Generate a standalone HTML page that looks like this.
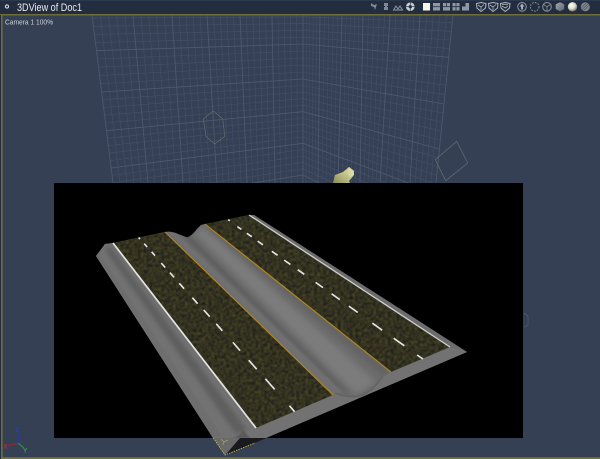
<!DOCTYPE html>
<html><head><meta charset="utf-8"><title>3DView of Doc1</title>
<style>html,body{margin:0;padding:0;background:#364156;overflow:hidden;width:600px;height:459px}svg{display:block}text{font-family:"Liberation Sans",sans-serif}</style>
</head><body>
<svg id="s" xmlns="http://www.w3.org/2000/svg" width="600" height="459" viewBox="0 0 600 459">
<defs>
<filter id="asph" filterUnits="userSpaceOnUse" x="100" y="210" width="360" height="225" color-interpolation-filters="sRGB">
<feTurbulence type="fractalNoise" baseFrequency="0.34" numOctaves="3" seed="4"/>
<feColorMatrix type="matrix" values="0.3 0 0 0 0.05  0.3 0 0 0 0.045  0.05 0 0 0 0.1  0 0 0 0 1"/>
<feGaussianBlur stdDeviation=".45"/>
</filter>
<filter id="b3" x="-30%" y="-30%" width="160%" height="160%"><feGaussianBlur stdDeviation="3"/></filter>
<filter id="b2" x="-30%" y="-30%" width="160%" height="160%"><feGaussianBlur stdDeviation="2"/></filter>
<filter id="b1"><feGaussianBlur stdDeviation=".6"/></filter>
<clipPath id="lanes"><polygon points="113,243 165,232 333,395 256,428"/><polygon points="205,224 249,215 450,347 391,372"/></clipPath>
<clipPath id="med"><path d="M165,232 Q172,231 178,234 L187,237.5 Q192,236 197,229 L201,225 L205,224 L391,372 L383,377 Q372,394 358,397 Q345,398 335,394 Z"/></clipPath>
<clipPath id="sh"><path d="M96,256 L105,244 L113,243 L256,428 L266,438 L213,438 Z"/></clipPath>
<clipPath id="view"><rect x="0" y="15" width="600" height="168"/></clipPath>
<linearGradient id="obj" x1="0" y1="1" x2="1" y2="0"><stop offset="0" stop-color="#8d8c58"/><stop offset=".6" stop-color="#c9c88e"/><stop offset="1" stop-color="#dcdba6"/></linearGradient>
<radialGradient id="sp" cx=".4" cy=".35" r=".7"><stop offset="0" stop-color="#fff"/><stop offset=".55" stop-color="#d8d8c4"/><stop offset="1" stop-color="#5e6462"/></radialGradient>
<linearGradient id="cube" x1="0" y1="0" x2="1" y2="1"><stop offset="0" stop-color="#a4a9af"/><stop offset="1" stop-color="#5b6371"/></linearGradient>
</defs>

<rect width="600" height="459" fill="#354055"/>
<g id="grid" clip-path="url(#view)" fill="none"></g>

<polygon points="213.3,111 222.7,118.7 224.7,136.3 214.7,144 206,136.3 203.3,119" fill="none" stroke="#626c70" stroke-width=".7"/>
<polygon points="456.7,141.3 467.7,163 445.7,180.7 435.3,159.7" fill="none" stroke="#646e70" stroke-width=".7"/>
<path d="M333,183 L335,175 L343,172 L349,167 L354,171 L354,175 L349,181 L350,183 Z" fill="url(#obj)"/>
<path d="M349,167 L354,171 L354,175 L350,177 Q347,172 349,167Z" fill="#d9d8a4"/>
<path d="M524,313 L528,316 L528,325 L524,327" fill="none" stroke="#4c586b" stroke-width=".8"/>

<!-- title bar -->
<rect width="600" height="14" fill="#222d3f"/>
<rect y="0" width="600" height="1" fill="#2c384b"/>
<rect y="14" width="600" height="1.5" fill="#706d35"/>
<rect y="14" x="1" width="1.6" height="445" fill="#706d35"/>
<rect y="457.2" width="600" height="1.8" fill="#75733c"/>
<rect x="0" y="15" width="1" height="444" fill="#222d3f"/>
<circle cx="7" cy="6.500" r="1.600" fill="none" stroke="#d5d9dd" stroke-width="1.100"/>
<text x="17" y="11" font-size="11" fill="#e8eaec" textLength="65" lengthAdjust="spacingAndGlyphs">3DView of Doc1</text>
<text x="5" y="24.500" font-size="7.500" fill="#cdd1d6" textLength="48" lengthAdjust="spacingAndGlyphs">Camera 1 100%</text>

<!-- toolbar icons -->
<g fill="#7f8894" stroke="none">
<path d="M371,3 L374,5 L377,4 L376,7 L375,10 L374,7 L371,6Z"/>
<path d="M384,3h4v3h-1v1h1v3h-4v-3h1v-1h-1z"/>
<path d="M393.500,10 L396,6 L398,9 L400,6 L402.500,10 Z" fill="none" stroke="#8d96a1" stroke-width="1"/>
<circle cx="410.300" cy="6.700" r="4.300" fill="#c9ced3"/>
<circle cx="410.300" cy="6.700" r="1.600" fill="#222d3f"/>
<path d="M410.300,2v9.500M405.800,6.700h9" stroke="#222d3f" stroke-width=".7"/>
<rect x="423" y="3" width="7" height="7.500" fill="#f6f6ea"/>
<rect x="433" y="3" width="7" height="7.500" fill="#8f98a3"/><rect x="433" y="6.300" width="7" height=".8" fill="#222d3f"/>
<rect x="443" y="3" width="7" height="7.500" fill="#8f98a3"/><rect x="443" y="6.300" width="7" height=".8" fill="#222d3f"/><rect x="446" y="3" width=".8" height="3.300" fill="#222d3f"/>
<rect x="452.500" y="3" width="7" height="7.500" fill="#8f98a3"/><path d="M452.500,6.700h7M456,3v7.500" stroke="#222d3f" stroke-width=".8"/>
<rect x="462" y="3" width="7" height="7.500" fill="#8f98a3"/><rect x="462" y="3" width="3.500" height="3.500" fill="#222d3f"/>
</g>
<g fill="none" stroke="#b2b8c0" stroke-width="1">
<path d="M476.500,3.500 L481,2.500 L486,3.500 L485.500,8 L481,11.500 L477,8Z"/><path d="M478,5 L481,7 L484,4.500M481,7V10" stroke-width=".8"/>
<path d="M488.500,3.500 L493,2.500 L498,3.500 L497.500,8 L493,11.500 L489,8Z"/><path d="M490,5 L493,7 L496,4.500M493,7V10" stroke-width=".8"/>
<path d="M500.500,3.500 L505.300,2.500 L510,3.500 L509.500,8 L505.300,11.500 L501,8Z"/><path d="M502,6 L505.300,8 L508,6M502,4.500h6" stroke-width=".8"/>
<circle cx="522" cy="6.800" r="4.300" stroke="#8c95a0"/>
<path d="M522,3.500 L524.500,6.500H523V9.500H521V6.500H519.500Z" fill="#a8afb8" stroke="none"/>
<circle cx="534.700" cy="6.800" r="4.300" stroke="#8c95a0" stroke-dasharray="1.600 1.300"/>
<circle cx="547" cy="6.800" r="4.300" stroke="#8c95a0"/>
<path d="M544,4.800 L547,6.800 L550,4.800M547,6.800V10.500" stroke="#8c95a0" stroke-width=".8"/>
</g>
<path d="M560,2.200 L564.300,4.300 V9 L560,11.300 L555.700,9 V4.300Z" fill="url(#cube)"/>
<circle cx="572.500" cy="6.800" r="4.700" fill="url(#sp)"/>
<circle cx="585.300" cy="6.800" r="4.500" fill="#7f858d"/>
<path d="M582,9.500 L588.500,3.500M583.500,10.500 L589.500,5M581.300,7.500 L586.500,2.800" stroke="#555c68" stroke-width=".7"/>

<!-- axis -->
<path d="M18.300,443.300 L17.800,432" stroke="#2a3aa0" stroke-width="1.400"/>
<path d="M18.300,443.300 L8,445.500" stroke="#8a2b36" stroke-width="1.400"/>
<path d="M18.300,443.300 L24,448" stroke="#2a8a40" stroke-width="1.400"/>
<text x="15.200" y="432" font-size="6.500" fill="#2d3fb8" font-weight="bold">Z</text>
<text x="3.300" y="448.500" font-size="6.500" fill="#a83040" font-weight="bold">X</text>
<text x="23" y="452.500" font-size="6.500" fill="#2fa048" font-weight="bold">Y</text>

<!-- render window -->
<rect x="54" y="183" width="469" height="255" fill="#000"/>

<!-- road base (with median dip in silhouette) -->
<path d="M96,256 L105,244 L113,243 L165,232 Q172,231 178,234 L187,237.500 Q192,236 197,229 L201,225 L249,215 L254,215 L467,352 L266,438 L213,438 Z" fill="#727272"/>
<polygon points="249,215 254,215 467,352 450,347" fill="#6c6c6c"/>
<polygon points="256,428 333,395 391,372 450,347 467,352 266,438" fill="#727272"/>
<!-- left shoulder shading -->
<g clip-path="url(#sh)">
<rect x="90" y="240" width="180" height="200" fill="#727272"/>
<polygon points="105,250 110,246 247,430 236,434" fill="#5e5e5e" filter="url(#b2)"/>
<polygon points="96,256 99,253 222,436 213,438" fill="#6e6e6e" filter="url(#b1)"/>
<path d="M232,438 Q240,436 243,430 L250,438Z" fill="#5a5a5a" filter="url(#b1)"/>
</g>
<!-- median -->
<g clip-path="url(#med)">
<rect x="160" y="220" width="240" height="180" fill="#6c6c6c"/>
<polygon points="195,233 204,228 376,382 356,394" fill="#7c7c7c" filter="url(#b3)"/>
<polygon points="184,236 189,236 349,394 342,390" fill="#565656" filter="url(#b2)"/>
<polygon points="168,232 176,233 342,392 334,394" fill="#707070" filter="url(#b1)"/>
<polygon points="203,224 209,224 391,372 384,377" fill="#646464" filter="url(#b2)"/>
<path d="M335,394 Q345,398 358,397 Q372,394 383,377" fill="none" stroke="#626262" stroke-width="3" filter="url(#b1)"/>
</g>
<!-- asphalt -->
<g clip-path="url(#lanes)"><rect x="100" y="210" width="360" height="225" filter="url(#asph)"/></g>
<!-- lines -->
<g fill="none" stroke-linecap="butt">
<path d="M113,243 L256,428" stroke="#e4e4e4" stroke-width="1.700"/>
<path d="M249,215 L450,347" stroke="#d0d0d0" stroke-width="1.300"/>
<path d="M165,232 L333,395" stroke="#b5871f" stroke-width="1.100"/>
<path d="M205,224 L391,372" stroke="#b5871f" stroke-width="1.100"/>
</g>
<g id="dashes" stroke="#e8e8e8" stroke-width="1.600" fill="none"></g>

<!-- tip under window -->
<polygon points="213.300,438 240,438 225,455" fill="#6a6a6a"/>
<polygon points="240,438 266.700,438 225.500,455" fill="#191a1d"/>
<path d="M221,439 L224,442 L228,440M224,442 L223,445" fill="none" stroke="#a8a860" stroke-width=".7"/>
<path d="M213.300,438 L225,455 L255,443" fill="none" stroke="#c8c44a" stroke-width=".8" stroke-dasharray="1.500 1"/>
</svg>
<script>
(function(){
var NS="http://www.w3.org/2000/svg",g=document.getElementById("grid"),minor="",major="";
function seg(a,b,c,d){return "M"+a.toFixed(1)+","+b.toFixed(1)+"L"+c.toFixed(1)+","+d.toFixed(1);}
var Y0=15,Y1=183,N=5;
function wall(tops,bots,hs,edge){
 for(var i=0;i<tops.length;i++){
  major+=seg(tops[i],Y0,bots[i],Y1);
  if(i<tops.length-1)for(var k=1;k<N;k++){var f=k/N;
   minor+=seg(tops[i]+(tops[i+1]-tops[i])*f,Y0,bots[i]+(bots[i+1]-bots[i])*f,Y1);}
 }
 for(var j=0;j<hs.length;j++){
  var yE=hs[j][0],yC=hs[j][1];
  major+=seg(edge(yE),yE,303,yC);
  if(j<hs.length-1)for(var m=1;m<N;m++){var q=m/N,a=yE+(hs[j+1][0]-yE)*q,b=yC+(hs[j+1][1]-yC)*q;
   minor+=seg(edge(a),a,303,b);}
 }
}
wall([92,133,172,207,240,272,303],[113,148,183,217,247,275,303],
 [[10,10],[50.7,44],[92,79],[130.7,111.7],[168,143.3],[205,175]],function(y){return 92+(y-15)*21/168;});
wall([453,420,390,363,342,320,303],[436,410,380,360,338,318,303],
 [[14,10],[57.3,44],[104,79],[149,111.7],[193,143.3],[238,175]],function(y){return 453-(y-15)*17/168;});
function add(d,c,w){var p=document.createElementNS(NS,"path");p.setAttribute("d",d);p.setAttribute("stroke",c);p.setAttribute("stroke-width",w);g.appendChild(p);}
add(minor,"#435067",".6");add(major,"#4c5970",".85");
var D=document.getElementById("dashes"),s="";
var L=[[139.3,238.3,1],[145.7,245.3,2.2],[153.3,253.7,2.6],[163.3,265.3,3],[172,275,3.2],[181.7,286,3.6],[195,300.7,4],[206.7,313.3,4.5],[219.3,327.3,4.7],[236.5,346.5,5.5],[252.7,364.7,6],[270,384,7],[292,408.7,4]];
var R=[[229,220.3,1],[239.3,228,2.5],[249.3,235,3],[260.3,243,3.2],[274.7,253.3,3.5],[287.3,262.3,3.8],[301,272,4],[319.3,285,4.5],[335.7,296.7,5],[353.3,309.3,5.5],[377.3,326.7,6],[399,342,6.5],[420,357,3.5]];
L.forEach(function(a){s+=seg(a[0]-.66*a[2],a[1]-.75*a[2],a[0]+.66*a[2],a[1]+.75*a[2]);});
R.forEach(function(a){s+=seg(a[0]-.82*a[2],a[1]-.58*a[2],a[0]+.82*a[2],a[1]+.58*a[2]);});
var p=document.createElementNS(NS,"path");p.setAttribute("d",s);D.appendChild(p);
})();
</script>
</body></html>
